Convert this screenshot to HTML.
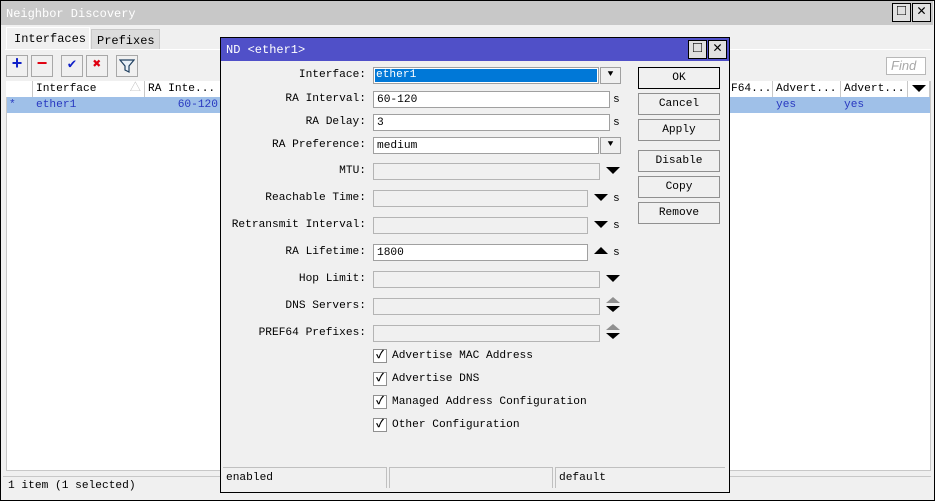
<!DOCTYPE html>
<html><head><style>
*{box-sizing:border-box;margin:0;padding:0}
body{width:935px;height:501px;background:#f0f0f0;font-family:"Liberation Mono","Noto Sans CJK SC",monospace;font-size:11.2px;position:relative;overflow:hidden;color:#000}
.a{position:absolute}
.main{left:0;top:0;width:935px;height:501px;border:1px solid #000;background:#f0f0f0}
.tb{left:1px;top:1px;width:932px;height:24px;background:#c8c8c8;color:#fff;font-size:12px;padding:6px 5px}
.wbtn{width:19px;height:19px;border:1px solid #000;background:#e0e0e0;font-size:15px;line-height:16px;text-align:center}
.fld{height:17px;border:1px solid #a0a0a0;background:#fff;padding:0 3px;line-height:16px}
.dis{background:#f0f0f0;border-color:#b4b4b4}
.lbl{text-align:right;width:140px;left:226px;line-height:17px}
.btn{left:638px;width:82px;height:22px;border:1px solid #909090;background:#f0f0f0;text-align:center;line-height:21px}
.dd{width:21px;height:17px;border:1px solid #a0a0a0;background:#f0f0f0;text-align:center;font-size:10px;line-height:15px}
.tri{width:0;height:0;border-left:7px solid transparent;border-right:7px solid transparent;border-top:7px solid #000}
.triu{width:0;height:0;border-left:7px solid transparent;border-right:7px solid transparent;border-bottom:7px solid #000}
.cb{width:14px;height:14px;border:1px solid #909090;background:#fff;font-size:11px;line-height:12px;text-align:center;font-weight:bold}
.th{top:81px;height:16px;border-right:1px solid #c8c8c8;padding:0 3px;background:#fff;line-height:17px}
.td{top:97px;height:16px;padding:0 3px;color:#2838c0;line-height:17px}
.tbtn{top:55px;width:22px;height:22px;border:1px solid #a8a8a8;background:#f0f0f0;text-align:center;font-weight:bold;font-size:18px;line-height:19px}
.s{line-height:17px}
</style></head><body>
<div class="a main"></div>
<div class="a tb">Neighbor Discovery</div>
<div class="a wbtn" style="left:892px;top:3px">&#9633;</div>
<div class="a wbtn" style="left:912px;top:3px">✕</div>
<div class="a" style="left:6px;top:27px;width:84px;height:23px;background:#f0f0f0;border:1px solid #fff;border-bottom:none;padding:4px 7px;font-size:12px">Interfaces</div>
<div class="a" style="left:91px;top:29px;width:69px;height:21px;background:#dcdcdc;border:1px solid #c8c8c8;padding:4px 5px;font-size:12px">Prefixes</div>
<div class="a" style="left:5px;top:49px;width:926px;height:1px;background:#fff"></div>
<div class="a tbtn" style="left:6px;color:#1020c8">+</div>
<div class="a tbtn" style="left:31px;color:#e00010">−</div>
<div class="a tbtn" style="left:61px;color:#1020c8;font-size:14px">✔</div>
<div class="a tbtn" style="left:86px;color:#e00010;font-size:14px">✖</div>
<div class="a tbtn" style="left:116px"><svg width="16" height="16" viewBox="0 0 16 16" style="margin-top:2px"><path d="M1 2h14l-5 6v6l-4-2V8z" fill="#e8f0f8" stroke="#204060" stroke-width="1.2"/></svg></div>
<div class="a" style="left:886px;top:57px;width:40px;height:18px;border:1px solid #b8b8b8;background:#fff;color:#a8a8a8;font-style:italic;font-family:'Liberation Sans',sans-serif;font-size:13px;padding:0 4px">Find</div>
<div class="a" style="left:6px;top:81px;width:925px;height:390px;background:#fff;border:1px solid #c8c8c8"></div>
<div class="a th" style="left:6px;width:27px"></div>
<div class="a th" style="left:33px;width:112px">Interface<span style="float:right;color:#bbb">△</span></div>
<div class="a th" style="left:145px;width:80px">RA Inte...</div>
<div class="a th" style="left:728px;width:45px">F64...</div>
<div class="a th" style="left:773px;width:68px">Advert...</div>
<div class="a th" style="left:841px;width:67px">Advert...</div>
<div class="a th" style="left:908px;width:22px"><div class="tri" style="margin:4px 0 0 1px"></div></div>
<div class="a" style="left:7px;top:97px;width:923px;height:16px;background:#9fc0e8"></div>
<div class="a td" style="left:6px">*</div>
<div class="a td" style="left:33px">ether1</div>
<div class="a td" style="left:145px;width:76px;text-align:right">60-120</div>
<div class="a td" style="left:773px">yes</div>
<div class="a td" style="left:841px">yes</div>
<div class="a" style="left:3px;top:476px;width:928px;height:19px;border-top:1px solid #c8c8c8;padding:3px 5px">1 item (1 selected)</div>

<div class="a" style="left:220px;top:37px;width:510px;height:456px;background:#f0f0f0;border:1px solid #000"></div>
<div class="a" style="left:221px;top:38px;width:508px;height:23px;background:#5050c8;color:#fff;font-size:12px;padding:5px 5px">ND &lt;ether1&gt;</div>
<div class="a wbtn" style="left:688px;top:40px">&#9633;</div>
<div class="a wbtn" style="left:708px;top:40px">✕</div>

<div class="a lbl" style="top:67px">Interface:</div>
<div class="a fld" style="left:373px;top:67px;width:226px"><span style="background:#0078d7;color:#fff;display:block;margin:1px -2px;padding:0 1px;height:13px;line-height:13px">ether1</span></div>
<div class="a dd" style="left:600px;top:67px">⯆</div>
<div class="a lbl" style="top:91px">RA Interval:</div>
<div class="a fld" style="left:373px;top:91px;width:237px">60-120</div><div class="a s" style="left:613px;top:92px">s</div>
<div class="a lbl" style="top:114px">RA Delay:</div>
<div class="a fld" style="left:373px;top:114px;width:237px">3</div><div class="a s" style="left:613px;top:115px">s</div>
<div class="a lbl" style="top:137px">RA Preference:</div>
<div class="a fld" style="left:373px;top:137px;width:226px">medium</div>
<div class="a dd" style="left:600px;top:137px">⯆</div>
<div class="a lbl" style="top:163px">MTU:</div>
<div class="a fld dis" style="left:373px;top:163px;width:227px"></div><div class="a tri" style="left:606px;top:167px"></div>
<div class="a lbl" style="top:190px">Reachable Time:</div>
<div class="a fld dis" style="left:373px;top:190px;width:215px"></div><div class="a tri" style="left:594px;top:194px"></div><div class="a s" style="left:613px;top:191px">s</div>
<div class="a lbl" style="top:217px">Retransmit Interval:</div>
<div class="a fld dis" style="left:373px;top:217px;width:215px"></div><div class="a tri" style="left:594px;top:221px"></div><div class="a s" style="left:613px;top:218px">s</div>
<div class="a lbl" style="top:244px">RA Lifetime:</div>
<div class="a fld" style="left:373px;top:244px;width:215px">1800</div><div class="a triu" style="left:594px;top:247px"></div><div class="a s" style="left:613px;top:245px">s</div>
<div class="a lbl" style="top:271px">Hop Limit:</div>
<div class="a fld dis" style="left:373px;top:271px;width:227px"></div><div class="a tri" style="left:606px;top:275px"></div>
<div class="a lbl" style="top:298px">DNS Servers:</div>
<div class="a fld dis" style="left:373px;top:298px;width:227px"></div><div class="a triu" style="left:606px;top:297px;border-bottom-color:#909090;border-bottom-width:6px"></div><div class="a tri" style="left:606px;top:306px;border-top-width:6px"></div>
<div class="a lbl" style="top:325px">PREF64 Prefixes:</div>
<div class="a fld dis" style="left:373px;top:325px;width:227px"></div><div class="a triu" style="left:606px;top:324px;border-bottom-color:#909090;border-bottom-width:6px"></div><div class="a tri" style="left:606px;top:333px;border-top-width:6px"></div>

<div class="a cb" style="left:373px;top:349px">✓</div><div class="a s" style="left:392px;top:348px">Advertise MAC Address</div>
<div class="a cb" style="left:373px;top:372px">✓</div><div class="a s" style="left:392px;top:371px">Advertise DNS</div>
<div class="a cb" style="left:373px;top:395px">✓</div><div class="a s" style="left:392px;top:394px">Managed Address Configuration</div>
<div class="a cb" style="left:373px;top:418px">✓</div><div class="a s" style="left:392px;top:417px">Other Configuration</div>

<div class="a btn" style="top:67px;border-color:#000">OK</div>
<div class="a btn" style="top:93px">Cancel</div>
<div class="a btn" style="top:119px">Apply</div>
<div class="a btn" style="top:150px">Disable</div>
<div class="a btn" style="top:176px">Copy</div>
<div class="a btn" style="top:202px">Remove</div>

<div class="a" style="left:223px;top:467px;width:164px;height:21px;border-top:1px solid #c0c0c0;border-right:1px solid #c0c0c0;padding:0 3px;line-height:20px">enabled</div>
<div class="a" style="left:389px;top:467px;width:164px;height:21px;border:1px solid #c0c0c0;border-bottom:none"></div>
<div class="a" style="left:555px;top:467px;width:170px;height:21px;border-top:1px solid #c0c0c0;border-left:1px solid #c0c0c0;padding:0 3px;line-height:20px">default</div>
</body></html>
